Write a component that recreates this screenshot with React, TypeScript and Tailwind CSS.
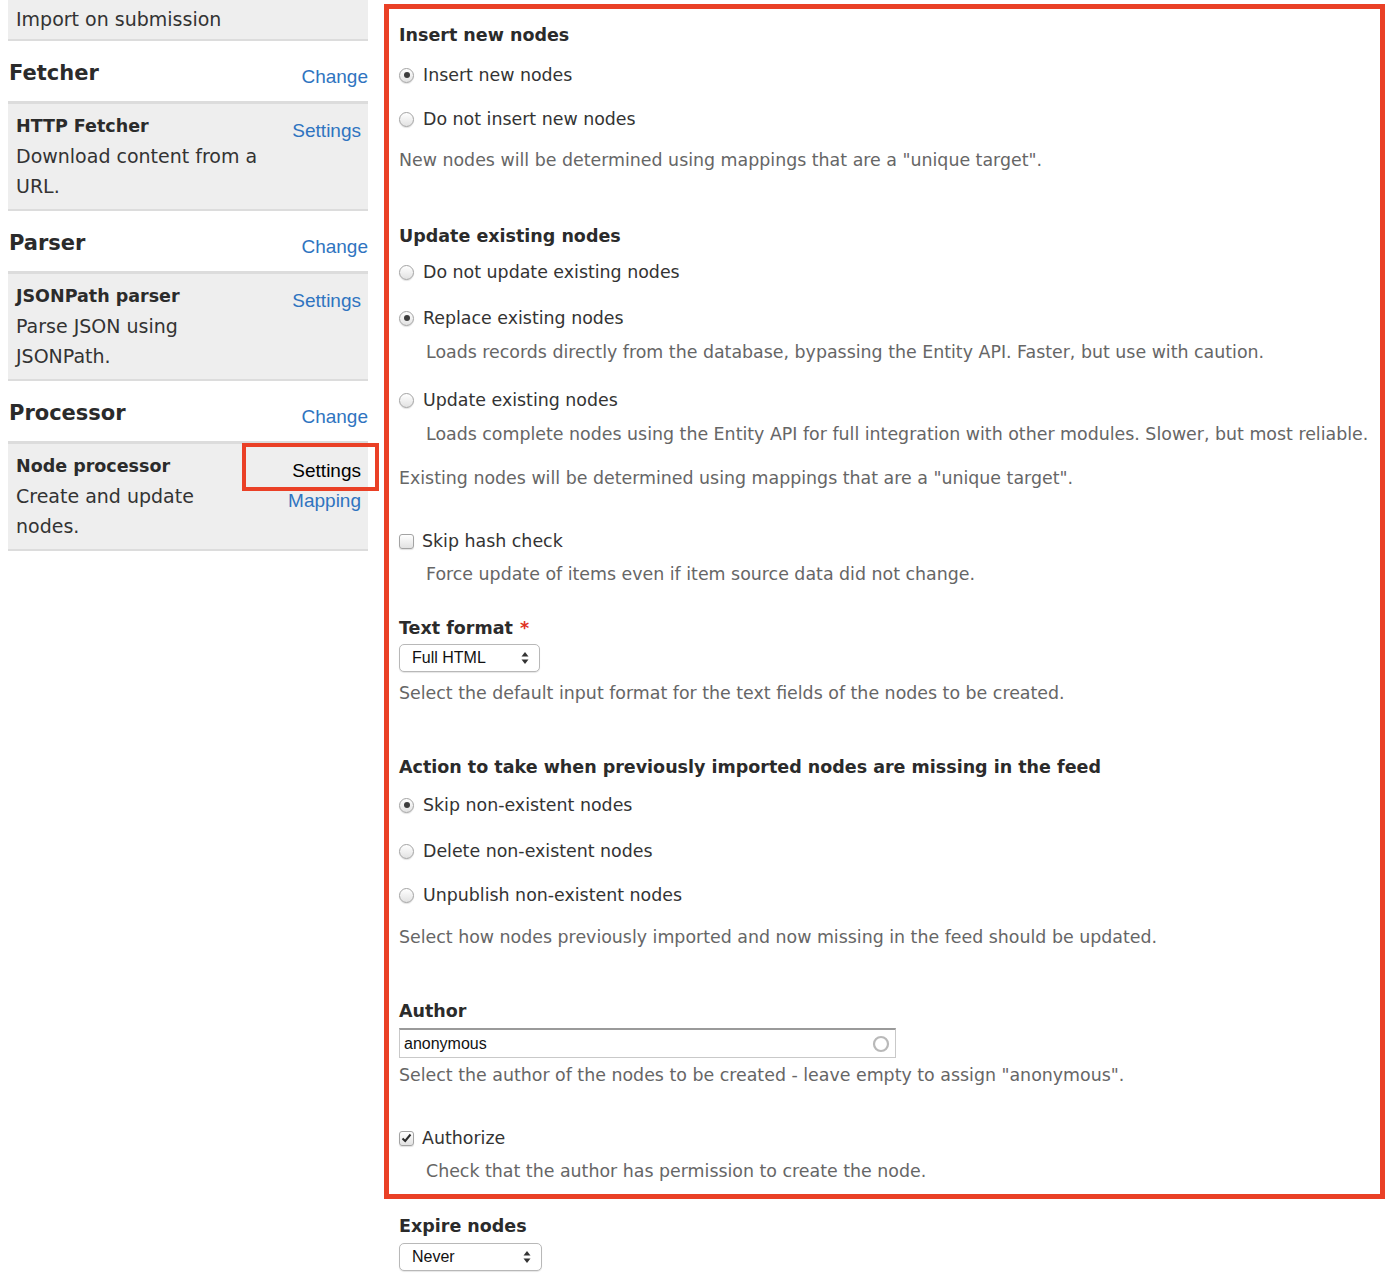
import React from "react";

const body = "font-['DejaVu_Sans',sans-serif]";
const arial = "font-['Liberation_Sans',Arial,sans-serif]";

function Radio({ checked, label, className }: { checked?: boolean; label: string; className: string }) {
  return (
    <div className={`flex items-center h-[30px] ${className}`}>
      <span className="w-[15px] h-[15px] rounded-full border border-[#a3a3a3] bg-gradient-to-b from-[#ffffff] to-[#e2e2e2] shadow-[0_1px_1px_rgba(0,0,0,0.12)] flex items-center justify-center">
        {checked && <span className="w-[6px] h-[6px] rounded-full bg-[#3d3d3d]" />}
      </span>
      <span className="ml-[9px] text-[17.4px] text-[#333]">{label}</span>
    </div>
  );
}

function Check({ checked, label, className }: { checked?: boolean; label: string; className: string }) {
  return (
    <div className={`flex items-center h-[30px] ${className}`}>
      <span className="w-[15px] h-[15px] rounded-[3px] border border-[#a3a3a3] bg-gradient-to-b from-[#ffffff] to-[#e2e2e2] shadow-[0_1px_1px_rgba(0,0,0,0.12)] flex items-center justify-center">
        {checked && (
          <svg width="11" height="10" viewBox="0 0 11 10">
            <path d="M1.5 5.5 L4.2 8 L9.5 1.5" fill="none" stroke="#2b2b2b" strokeWidth="2" />
          </svg>
        )}
      </span>
      <span className="ml-[8px] text-[17.4px] text-[#333]">{label}</span>
    </div>
  );
}

function Heading({ children, className }: { children: React.ReactNode; className: string }) {
  return (
    <div className={`flex items-center h-[30px] text-[17.5px] font-bold text-[#2b2b2b] ${className}`}>{children}</div>
  );
}

function Desc({ children, className }: { children: React.ReactNode; className: string }) {
  return <div className={`flex items-center h-[30px] text-[17.4px] text-[#666] ${className}`}>{children}</div>;
}

function Arrows() {
  return (
    <svg width="8" height="14" viewBox="0 0 8 14">
      <path d="M4 1 L7.5 5.5 L0.5 5.5 Z" fill="#333" />
      <path d="M4 13 L7.5 8.5 L0.5 8.5 Z" fill="#333" />
    </svg>
  );
}

function Select({ value, className }: { value: string; className: string }) {
  return (
    <div
      className={`flex items-center justify-between h-[28px] rounded-[5px] border border-[#b8b8b8] bg-white shadow-[0_1px_1px_rgba(0,0,0,0.1)] pl-[12px] pr-[10px] ${arial} text-[16px] text-[#111] ${className}`}
    >
      <span>{value}</span>
      <Arrows />
    </div>
  );
}

function SidebarHeading({ title }: { title: string }) {
  return (
    <div className="flex justify-between items-start h-[60px] pl-[1px]">
      <span className="pt-[18px] text-[21px] leading-[28px] font-bold text-[#2b2b2b]">{title}</span>
      <a className={`pt-[22px] leading-[28px] ${arial} text-[19px] text-[#2f74c0]`}>Change</a>
    </div>
  );
}

function PluginBox({
  title,
  lines,
  links,
  annotate,
}: {
  title: string;
  lines: string;
  links: string[];
  annotate?: boolean;
}) {
  return (
    <div className="relative flex justify-between border-t-[3px] border-b-2 border-[#dcdcdc] bg-[#eeeeee] pl-[8px] pr-[7px] pt-[7px] pb-[8px]">
      <div className="w-[243px] leading-[30px] text-[19px] text-[#333]">
        <div className="text-[17.5px] font-bold text-[#2b2b2b]">{title}</div>
        <div>{lines}</div>
      </div>
      <div className={`flex flex-col items-end pt-[5px] leading-[30px] text-[19px] ${arial}`}>
        {links.map((l, i) => (
          <a key={l} className={annotate && i === 0 ? "text-black" : "text-[#2f74c0]"}>
            {l}
          </a>
        ))}
      </div>
      {annotate && (
        <div className="absolute left-[234px] top-[-1px] w-[137px] h-[48px] border-4 border-[#ea4026]" />
      )}
    </div>
  );
}

export default function App() {
  return (
    <div className={`flex items-start bg-white min-h-[1275px] w-[1385px] ${body}`}>
      <aside className="w-[360px] ml-[8px] shrink-0">
        <div className="h-[41px] bg-[#eeeeee] border-b-2 border-[#dcdcdc] pl-[8px] flex items-center text-[19px] text-[#333]">
          Import on submission
        </div>
        <SidebarHeading title="Fetcher" />
        <PluginBox title="HTTP Fetcher" lines="Download content from a URL." links={["Settings"]} />
        <SidebarHeading title="Parser" />
        <PluginBox title="JSONPath parser" lines="Parse JSON using JSONPath." links={["Settings"]} />
        <SidebarHeading title="Processor" />
        <PluginBox title="Node processor" lines="Create and update nodes." links={["Settings", "Mapping"]} annotate />
      </aside>

      <main className="ml-[16px] mt-[4px] w-[1001px]">
        <div className="border-[5px] border-[#ea4026] pl-[10px] pt-[11px] pb-[8px]">
          <Heading className="">Insert new nodes</Heading>
          <Radio checked label="Insert new nodes" className="mt-[10px]" />
          <Radio label="Do not insert new nodes" className="mt-[14px]" />
          <Desc className="mt-[11px]">New nodes will be determined using mappings that are a "unique target".</Desc>

          <Heading className="mt-[46px]">Update existing nodes</Heading>
          <Radio label="Do not update existing nodes" className="mt-[6px]" />
          <Radio checked label="Replace existing nodes" className="mt-[16px]" />
          <Desc className="mt-[4px] pl-[27px]">
            Loads records directly from the database, bypassing the Entity API. Faster, but use with caution.
          </Desc>
          <Radio label="Update existing nodes" className="mt-[18px]" />
          <Desc className="mt-[4px] pl-[27px]">
            Loads complete nodes using the Entity API for full integration with other modules. Slower, but most
            reliable.
          </Desc>
          <Desc className="mt-[14px]">Existing nodes will be determined using mappings that are a "unique target".</Desc>

          <Check label="Skip hash check" className="mt-[33px]" />
          <Desc className="mt-[3px] pl-[27px]">Force update of items even if item source data did not change.</Desc>

          <Heading className="mt-[24px]">
            Text format<span className="ml-[7px] text-[#e0321f]">*</span>
          </Heading>
          <Select value="Full HTML" className="mt-[1px] w-[141px]" />
          <Desc className="mt-[6px]">Select the default input format for the text fields of the nodes to be created.</Desc>

          <Heading className="mt-[44px]">Action to take when previously imported nodes are missing in the feed</Heading>
          <Radio checked label="Skip non-existent nodes" className="mt-[8px]" />
          <Radio label="Delete non-existent nodes" className="mt-[16px]" />
          <Radio label="Unpublish non-existent nodes" className="mt-[14px]" />
          <Desc className="mt-[12px]">Select how nodes previously imported and now missing in the feed should be updated.</Desc>

          <Heading className="mt-[44px]">Author</Heading>
          <div className="mt-[2px] w-[497px] h-[30px] border border-[#c9c9c9] border-t-2 border-t-[#9a9a9a] bg-white flex items-center justify-between pl-[4px] pr-[5px]">
            <span className={`${arial} text-[16px] text-[#111]`}>anonymous</span>
            <svg width="18" height="18" viewBox="0 0 18 18">
              <circle cx="9" cy="9" r="7" fill="none" stroke="#b9b9b9" strokeWidth="2.2" />
            </svg>
          </div>
          <Desc className="mt-[2px]">
            Select the author of the nodes to be created - leave empty to assign "anonymous".
          </Desc>

          <Check checked label="Authorize" className="mt-[33px]" />
          <Desc className="mt-[3px] pl-[27px]">Check that the author has permission to create the node.</Desc>
        </div>

        <div className="pl-[15px]">
          <Heading className="mt-[12px]">Expire nodes</Heading>
          <Select value="Never" className="mt-[2px] w-[143px]" />
        </div>
      </main>
    </div>
  );
}
